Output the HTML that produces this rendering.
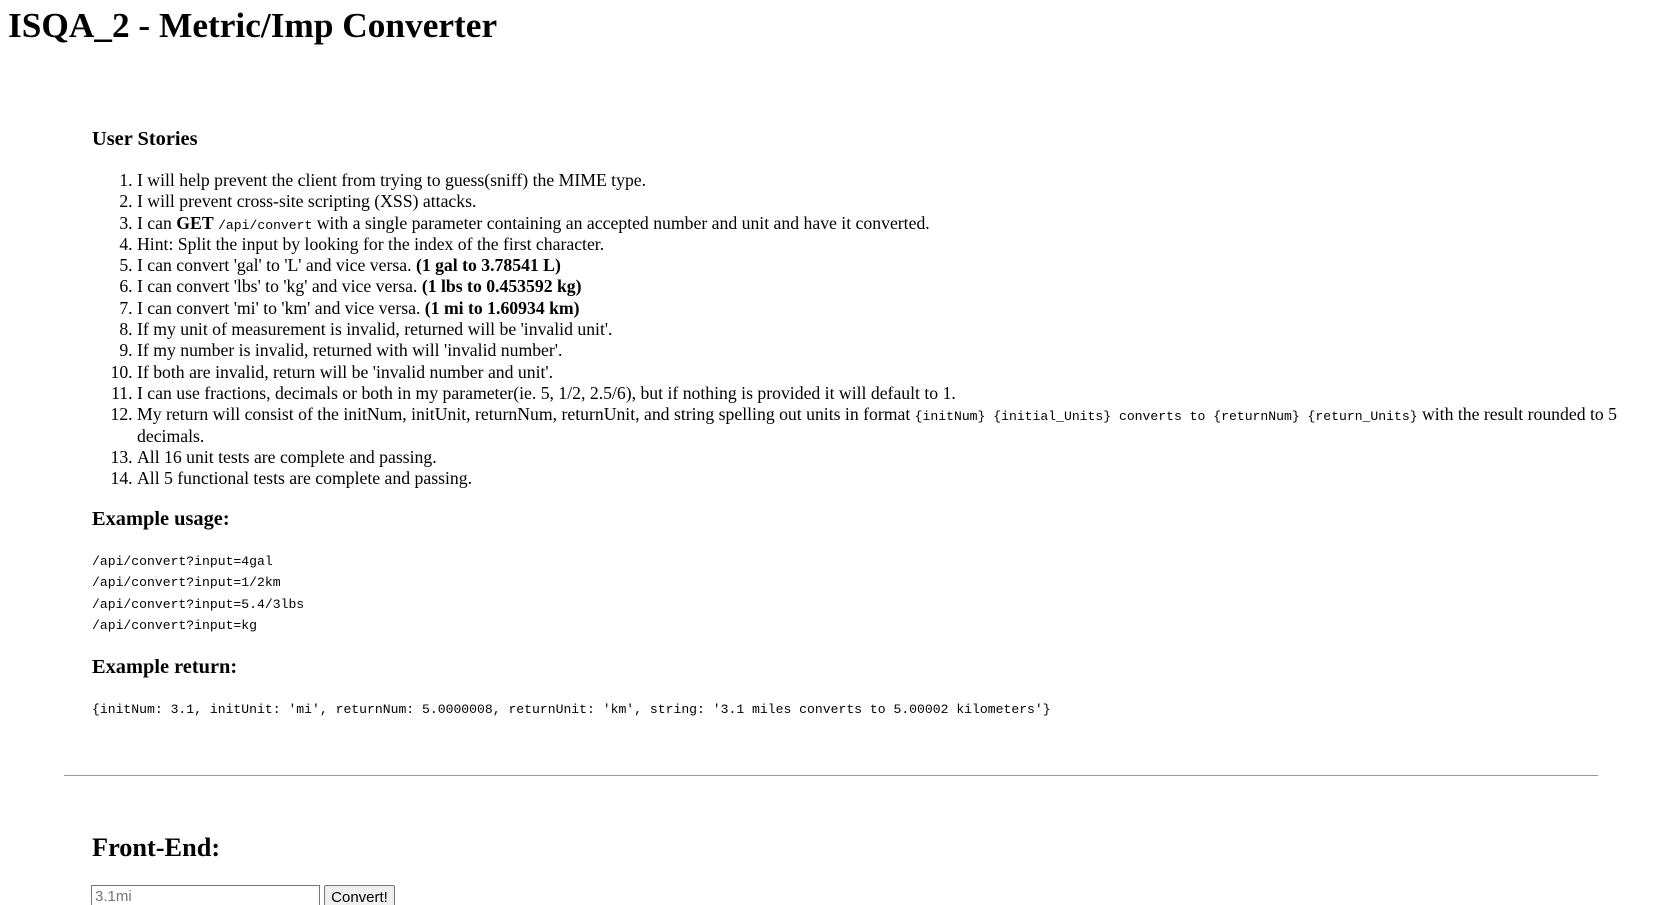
<!DOCTYPE html>
<html><head><meta charset="utf-8"><style>
html,body{margin:0;padding:0;background:#fff;width:1657px;height:905px;overflow:hidden;color:#000}
body{font-family:"Liberation Serif",serif;position:relative}
.a{position:absolute;white-space:nowrap}
h1{font-size:35.3px;line-height:43px;margin:0;font-weight:bold}
.h3{font-size:20.4px;line-height:25px;font-weight:bold}
ol.a{margin:0;padding:0 0 0 45px;font-size:17.7px;line-height:21.3px;width:1500px;white-space:normal}
code,pre{font-family:"Liberation Mono","DejaVu Sans Mono",monospace;font-size:13.1px}
code{line-height:1}
pre.a{margin:0;line-height:21.3px;white-space:pre}
hr{position:absolute;left:64px;top:775px;margin:0;border:0;border-top:1px solid #999;height:0}
input{position:absolute;left:91px;top:885px;width:221px;height:20px;border:1px solid #767676;padding:0 3px;font-family:"Liberation Sans",sans-serif;font-size:15px;color:#757575;box-sizing:content-box}
button{position:absolute;top:885px;width:71px;height:24px;border:1px solid #767676;background:#efefef;border-radius:2px;font-family:"Liberation Sans",sans-serif;font-size:15px;padding:0}
</style></head><body>
<h1 class="a" style="left:8px;top:4px">ISQA_2 - Metric/Imp Converter</h1>
<div class="a h3" style="left:92px;top:127px">User Stories</div>
<ol class="a" style="left:92px;top:170px">
<li>I will help prevent the client from trying to guess(sniff) the MIME type.</li>
<li>I will prevent cross-site scripting (XSS) attacks.</li>
<li>I can <b>GET</b> <code>/api/convert</code> with a single parameter containing an accepted number and unit and have it converted.</li>
<li>Hint: Split the input by looking for the index of the first character.</li>
<li>I can convert 'gal' to 'L' and vice versa. <b>(1 gal to 3.78541 L)</b></li>
<li>I can convert 'lbs' to 'kg' and vice versa. <b>(1 lbs to 0.453592 kg)</b></li>
<li>I can convert 'mi' to 'km' and vice versa. <b>(1 mi to 1.60934 km)</b></li>
<li>If my unit of measurement is invalid, returned will be 'invalid unit'.</li>
<li>If my number is invalid, returned with will 'invalid number'.</li>
<li>If both are invalid, return will be 'invalid number and unit'.</li>
<li>I can use fractions, decimals or both in my parameter(ie. 5, 1/2, 2.5/6), but if nothing is provided it will default to 1.</li>
<li>My return will consist of the initNum, initUnit, returnNum, returnUnit, and string spelling out units in format <code>{initNum} {initial_Units} converts to {returnNum} {return_Units}</code> with the result rounded to 5 decimals.</li>
<li>All 16 unit tests are complete and passing.</li>
<li>All 5 functional tests are complete and passing.</li>
</ol>
<div class="a h3" style="left:92px;top:507px">Example usage:</div>
<pre class="a" style="left:92px;top:551px">/api/convert?input=4gal
/api/convert?input=1/2km
/api/convert?input=5.4/3lbs
/api/convert?input=kg</pre>
<div class="a h3" style="left:92px;top:655px">Example return:</div>
<pre class="a" style="left:92px;top:699px">{initNum: 3.1, initUnit: 'mi', returnNum: 5.0000008, returnUnit: 'km', string: '3.1 miles converts to 5.00002 kilometers'}</pre>
<hr style="width:1534px">
<div class="a" style="left:92px;top:831px;font-size:26.3px;line-height:33px;font-weight:bold">Front-End:</div>
<input type="text" value="3.1mi">
<button style="left:324px">Convert!</button>
</body></html>
